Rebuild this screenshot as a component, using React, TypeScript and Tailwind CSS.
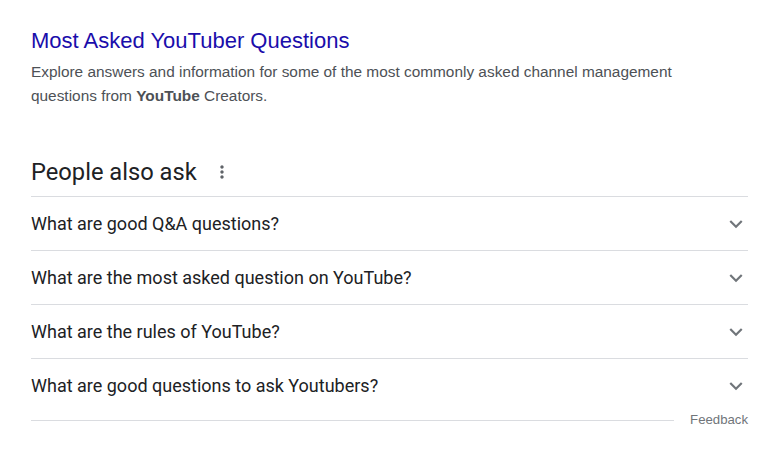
const questions = [
  "What are good Q&A questions?",
  "What are the most asked question on YouTube?",
  "What are the rules of YouTube?",
  "What are good questions to ask Youtubers?",
];

function ChevronDown() {
  return (
    <svg width="26" height="26" viewBox="0 0 24 24" className="-mr-[1px] shrink-0 fill-[#70757a]">
      <path d="M16.59 8.59L12 13.17 7.41 8.59 6 10l6 6 6-6z" />
    </svg>
  );
}

function MoreVert() {
  return (
    <svg width="20" height="20" viewBox="0 0 24 24" className="fill-[#5f6368]">
      <path d="M12 8c1.1 0 2-.9 2-2s-.9-2-2-2-2 .9-2 2 .9 2 2 2zm0 2c-1.1 0-2 .9-2 2s.9 2 2 2 2-.9 2-2-.9-2-2-2zm0 6c-1.1 0-2 .9-2 2s.9 2 2 2 2-.9 2-2-.9-2-2-2z" />
    </svg>
  );
}

export default function App() {
  return (
    <div className="min-h-[464px] w-[776px] bg-white pl-[31px] pr-[28px] pt-[27px] font-['Liberation_Sans',Arial,sans-serif]">
      <a href="#" className="block text-[22px] leading-[28px] text-[#1a0dab]">
        Most Asked YouTuber Questions
      </a>
      <p className="mt-[5px] max-w-[660px] text-[15.4px] leading-[24px] text-[#4d5156]">
        Explore answers and information for some of the most commonly asked channel management
        questions from <b className="font-bold">YouTube</b> Creators.
      </p>

      <div className="mt-[50px] flex items-center pb-[10px]">
        <h2 className="font-['Roboto',sans-serif] text-[23.7px] leading-[28px] text-[#202124]">
          People also ask
        </h2>
        <span className="ml-[15px] flex items-center">
          <MoreVert />
        </span>
      </div>

      <div>
        {questions.map((q) => (
          <div
            key={q}
            className="flex h-[54px] items-center justify-between border-t border-[#dadce0]"
          >
            <span className="font-['Roboto',sans-serif] text-[18px] text-[#202124]">{q}</span>
            <ChevronDown />
          </div>
        ))}
      </div>

      <div className="flex h-[16px] items-center">
        <div className="flex-1 border-t border-[#dadce0]" />
        <span className="ml-[16px] text-[13.2px] text-[#70757a]">Feedback</span>
      </div>
    </div>
  );
}
